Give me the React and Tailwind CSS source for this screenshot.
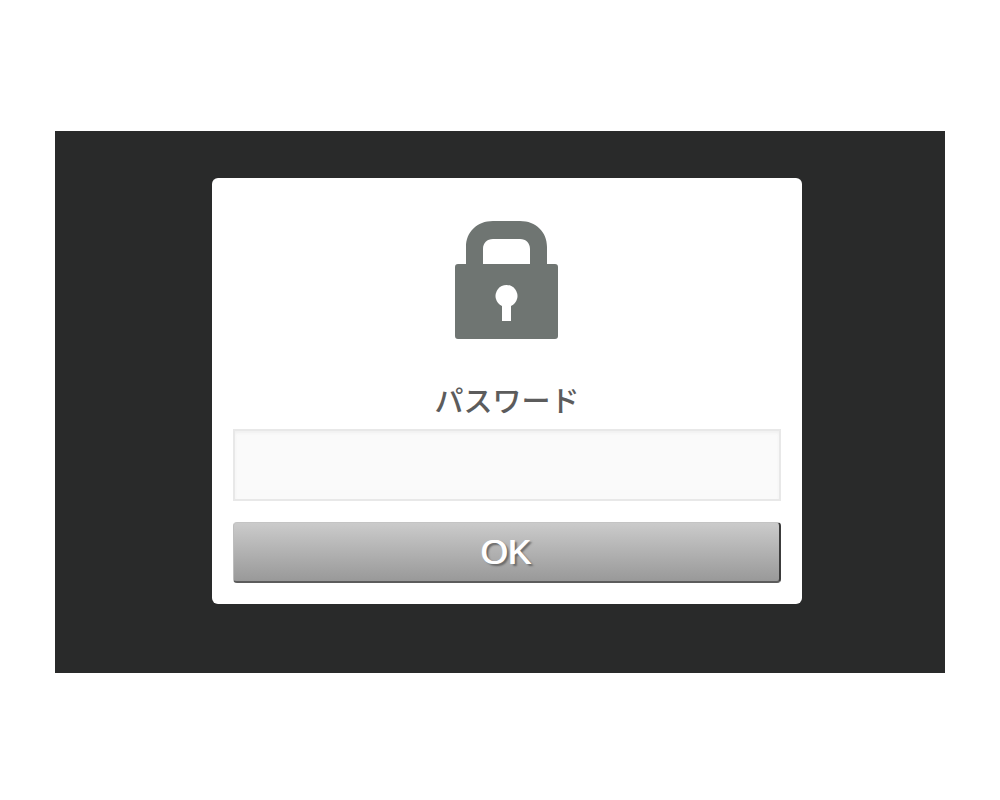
import { useState } from 'react';

const LockIcon = () => (
  <svg width="104" height="118" viewBox="0 0 104 118" fill="#6f7572" aria-hidden="true">
    <path
      fillRule="evenodd"
      d="M11 45V26C11 11 22 0 38 0H65C81 0 92 11 92 26V45H75V28C75 22 71 18 65 18H38C32 18 28 22 28 28V45Z"
    />
    <path
      fillRule="evenodd"
      d="M3 43H100Q103 43 103 46V115Q103 118 100 118H3Q0 118 0 115V46Q0 43 3 43ZM47 100H56V85A11 11 0 1 0 47 85Z"
    />
  </svg>
);

const App = () => {
  const [password, setPassword] = useState('');

  const handleSubmit = (event) => {
    event.preventDefault();
    setPassword('');
  };

  return (
    <div className="min-h-screen bg-white px-[55px] py-[131px] font-['Liberation_Sans','Noto_Sans_CJK_JP',sans-serif]">
      <main className="bg-[#292a2a] pt-[47px] pr-[143px] pb-[69px] pl-[157px]">
        <form
          onSubmit={handleSubmit}
          className="flex flex-col items-center rounded-md bg-white px-[21px] pt-[43px] pb-[21px]"
        >
          <LockIcon />
          <label htmlFor="password" className="mt-[43px] text-[29px] leading-[40px] font-medium text-[#5c5c5c]">
            パスワード
          </label>
          <input
            id="password"
            type="password"
            value={password}
            onChange={(event) => setPassword(event.target.value)}
            className="mt-[7px] h-[72px] w-full border-2 border-[#e8e8e8] bg-[#fafafa] px-4 text-[29px] shadow-[inset_0_2px_3px_#f0f0f0] outline-none"
          />
          <button
            type="submit"
            className="mt-[21px] h-[61px] w-full rounded border-t border-r-2 border-b-2 border-l border-t-[#c4c4c4] border-r-[#3c3c3c] border-b-[#5c5c5c] border-l-[#bdbdbd] bg-linear-to-b from-[#cbcbcb] to-[#999999] text-[35px] leading-[40px] text-white [text-shadow:-1px_0_0_#fff,2px_2px_2px_#666]"
          >
            OK
          </button>
        </form>
      </main>
    </div>
  );
};

export default App;
